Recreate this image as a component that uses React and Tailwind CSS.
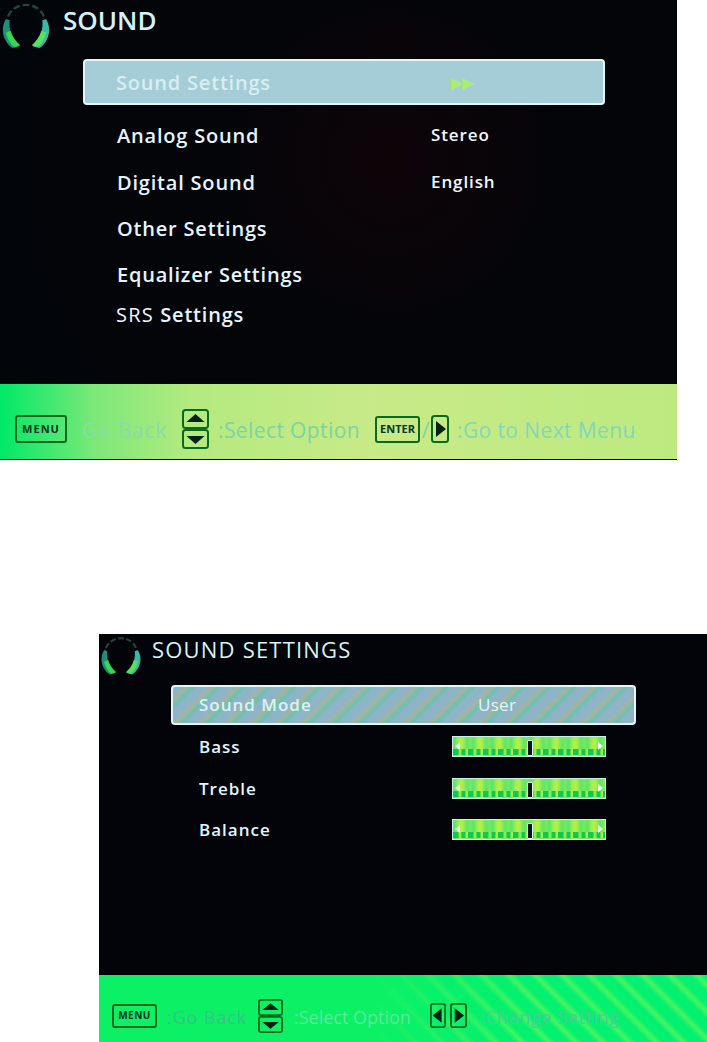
import React from 'react';

const font = { fontFamily: '"Open Sans", "Noto Sans", sans-serif' };

const Headset = ({ size = 52 }) => (
  <svg width={size} height={size} viewBox="0 0 52 52" fill="none" className="shrink-0">
    <path d="M6 26C5 12 15 4 26 4s21 8 20 22" stroke="#1c4a38" strokeWidth="2.5" strokeDasharray="7 3" />
    <path d="M5 19C-1 29 2 42 12 49l7-2C11 39 8 30 9 20z" fill="#1c8f78" />
    <path d="M5 33c2 7 5 12 9 15l6-2c-5-4-8-9-10-15z" fill="#38d84e" />
    <path d="M47 19c6 10 3 23-7 30l-7-2c8-8 11-17 10-27z" fill="#3cb8a8" />
    <path d="M47 33c-2 7-5 12-9 15l-6-2c5-4 8-9 10-15z" fill="#58e060" />
  </svg>
);

const ArrowBox = ({ dir, w = 18, h = 28 }) => (
  <svg width={w} height={h} viewBox="0 0 18 28" className="shrink-0" preserveAspectRatio="none">
    <rect x="1" y="1" width="16" height="26" rx="2.5" fill="none" stroke="#0a6a1c" strokeWidth="2" />
    {dir === 'right' ? <path d="M5 6l10 8-10 8z" fill="#06201a" /> : <path d="M13 6L3 14l10 8z" fill="#06201a" />}
  </svg>
);

const UpDown = ({ w = 27, h = 40 }) => (
  <svg width={w} height={h} viewBox="0 0 27 40" className="shrink-0" preserveAspectRatio="none">
    <rect x="1" y="1" width="25" height="18" rx="2.5" fill="none" stroke="#0a6a1c" strokeWidth="2" />
    <rect x="1" y="21" width="25" height="18" rx="2.5" fill="none" stroke="#0a6a1c" strokeWidth="2" />
    <path d="M13.5 5l9 8h-18z" fill="#06201a" />
    <path d="M13.5 35l9-8h-18z" fill="#06201a" />
  </svg>
);

const KeyBox = ({ children, className }) => (
  <div className={`flex items-center justify-center border-2 border-[#0a6a1c] rounded-[3px] font-bold text-[#06351c] shrink-0 ${className}`} style={font}>
    {children}
  </div>
);

const Slider = () => (
  <div className="relative w-[154px] h-[21px] border border-[#c4f4e4] overflow-hidden bg-[#7cec58]">
    <div className="absolute inset-0 blur-[1px] bg-[repeating-linear-gradient(90deg,#3ce07c_0px,#a8f04c_6px,#c0f040_9px,#58e470_14px,#8cec50_19px)]" />
    <div className="absolute inset-x-0 bottom-[1px] h-[6px] blur-[0.6px] bg-[repeating-linear-gradient(90deg,#10c850_0px,#10c850_5px,#8cec4c_6px,#8cec4c_8px,#10c850_9px,#10c850_12px,#a0f04c_13px,#a0f04c_15px)]" />
    <div className="absolute left-[2px] top-[5px] w-0 h-0 border-y-[4px] border-y-transparent border-r-[5px] border-r-[#d8f8e8]" />
    <div className="absolute right-[2px] top-[5px] w-0 h-0 border-y-[4px] border-y-transparent border-l-[5px] border-l-[#e8fcf0]" />
    <div className="absolute left-[74px] top-[3px] w-[6px] h-[16px] bg-[#0a1412] border border-[#d8f8e8] rounded-[1px]" />
  </div>
);

const mainRows = [
  { label: 'Analog Sound', value: 'Stereo', h: 'h-[46px]' },
  { label: 'Digital Sound', value: 'English', h: 'h-[47px]' },
  { label: 'Other Settings', h: 'h-[46px]' },
  { label: 'Equalizer Settings', h: 'h-[46px]' },
];

const App = () => (
  <div className="w-[707px] h-[1042px] bg-white overflow-hidden" style={font}>
    {/* first menu */}
    <div className="w-[677px] h-[460px] flex flex-col bg-[radial-gradient(circle_at_390px_160px,#0e0408_0px,#040508_170px,#02050a_100%)]">
      <div className="h-[59px] flex items-start">
        <div className="ml-[1px] mt-[1px]"><Headset size={50} /></div>
        <span className="ml-[12px] mt-[2px] text-[26px] leading-[36px] font-semibold text-[#d6f2f8]">SOUND</span>
      </div>
      <div className="ml-[83px] w-[522px] h-[46px] flex items-center rounded-[4px] border-2 border-[#e4f6fa] bg-[#a4cdd8]">
        <span className="ml-[31px] w-[335px] pt-[1px] text-[20px] font-semibold tracking-[0.8px] text-[#d8eef0]">Sound Settings</span>
        <span className="text-[15px] font-bold tracking-[-1px] text-[#a8ec70]">▶▶</span>
      </div>
      <div className="mt-[8px] flex flex-col">
        {mainRows.map((r) => (
          <div key={r.label} className={`${r.h} flex items-center pl-[117px]`}>
            <span className="w-[314px] text-[20px] font-semibold tracking-[0.8px] text-[#e6f4ff]">{r.label}</span>
            {r.value && <span className="text-[17px] font-semibold tracking-[0.9px] text-[#eef8ff] pb-[2px]">{r.value}</span>}
          </div>
        ))}
        <div className="h-[34px] flex items-center pl-[116px] text-[20px] tracking-[1.2px] text-[#f2f6ff]">
          SRS&nbsp;<span className="font-semibold tracking-[0.8px] text-[#e6f4ff]">Settings</span>
        </div>
      </div>
      <div className="mt-auto h-[76px] flex items-center pl-[15px] pt-[15px] bg-[linear-gradient(90deg,#00e868_0%,#7ce878_14%,#b4ea80_28%,#c8ea88_55%,#bcea80_100%)] border-b border-black">
        <KeyBox className="w-[52px] h-[28px] text-[11px] tracking-[1px]">MENU</KeyBox>
        <span className="ml-[15px] w-[100px] pt-[4px] text-[21px] tracking-[0.8px] text-[#8cdca4]">Go Back</span>
        <UpDown />
        <span className="ml-[9px] w-[157px] pt-[4px] text-[21px] text-[#7cd4a4] tracking-[0.4px]">:Select Option</span>
        <KeyBox className="w-[45px] h-[27px] text-[11px]">ENTER</KeyBox>
        <span className="w-[11px] pt-[4px] text-center text-[21px] text-[#7cd4a4]">/</span>
        <ArrowBox dir="right" />
        <span className="ml-[8px] pt-[4px] text-[21px] text-[#84d8b4] tracking-[0.4px]">:Go to Next Menu</span>
      </div>
    </div>

    {/* second menu */}
    <div className="mt-[174px] ml-[99px] w-[608px] h-[408px] flex flex-col bg-[#02040a]">
      <div className="h-[51px] flex items-start">
        <div className="ml-[1px] mt-[1px]"><Headset size={42} /></div>
        <span className="ml-[10px] text-[22px] leading-[30px] tracking-[1.2px] text-[#d6f4f4]">SOUND SETTINGS</span>
      </div>
      <div className="ml-[72px] w-[465px] h-[40px] flex items-center rounded-[4px] border-2 border-[#e4f6fa] bg-[repeating-linear-gradient(135deg,#8fb4c8_0px,#8fb4c8_6px,#a4b49c_10px,#6cc0b4_14px,#8fb4c8_18px)]">
        <span className="ml-[26px] w-[279px] text-[17px] font-semibold tracking-[1px] text-[#d8f4f4]">Sound Mode</span>
        <span className="text-[17px] tracking-[0.3px] text-[#e2f6f4]">User</span>
      </div>
      {['Bass', 'Treble', 'Balance'].map((label, i) => (
        <div key={label} className={`h-[41.5px] flex items-center pl-[100px] ${i === 0 ? 'mt-[1px]' : ''}`}>
          <span className="w-[253px] text-[17px] font-semibold tracking-[1px] text-[#e2f6ff]">{label}</span>
          <Slider />
        </div>
      ))}
      <div className="mt-auto h-[67px] flex items-center pl-[13px] pt-[14px] bg-[linear-gradient(90deg,#0cf066_0%,#0cf066_45%,rgba(12,240,102,0)_70%),repeating-linear-gradient(45deg,#04f070_0px,#04f070_9px,#48f460_14px,#04f070_19px)]">
        <KeyBox className="w-[45px] h-[24px] text-[10px] tracking-[0.5px]">MENU</KeyBox>
        <span className="ml-[10px] w-[91px] pt-[3px] text-[18px] tracking-[0.9px] text-[#3cc088]">:Go Back</span>
        <UpDown w={25} h={34} />
        <span className="ml-[11px] w-[136px] pt-[3px] text-[18px] text-[#5ce898]">:Select Option</span>
        <ArrowBox dir="left" w={16} h={25} />
        <div className="ml-[4px]"><ArrowBox dir="right" w={17} h={25} /></div>
        <span className="ml-[13px] pt-[3px] text-[18px] tracking-[0.6px] text-[#48cc98]">:Change Setting</span>
      </div>
    </div>
  </div>
);

export default App;
